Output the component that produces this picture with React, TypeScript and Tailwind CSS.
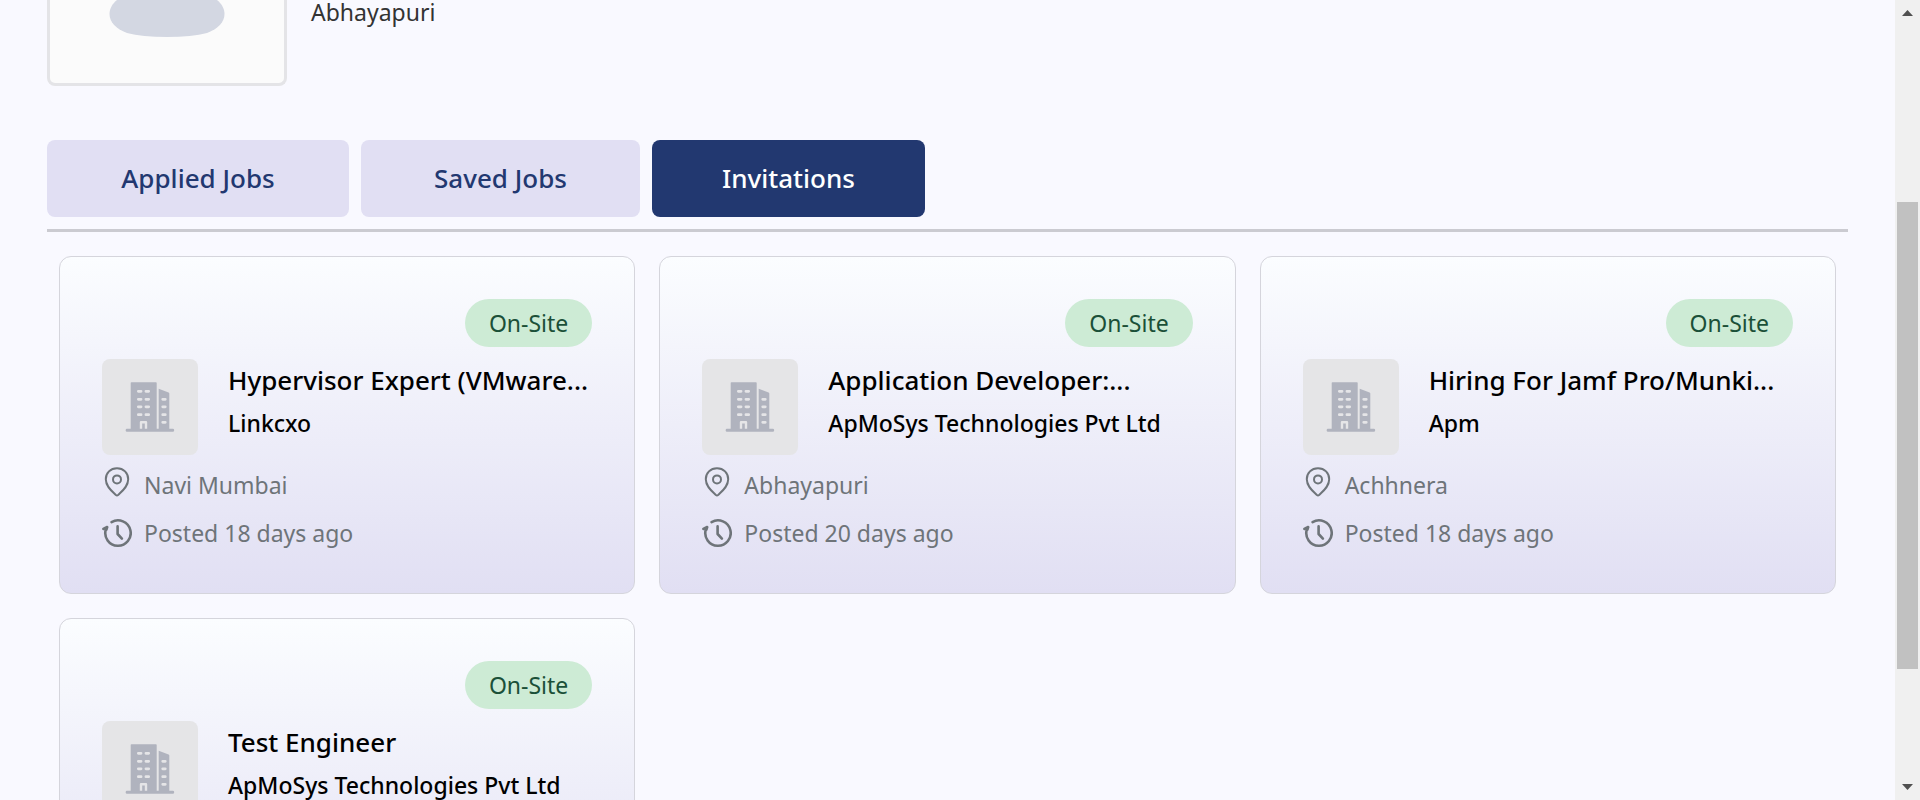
import { useState } from "react";

type Job = { title: string; company: string; location: string; posted: string; mode: string };

const jobs: Job[] = [
  { title: "Hypervisor Expert (VMware...", company: "Linkcxo", location: "Navi Mumbai", posted: "Posted 18 days ago", mode: "On-Site" },
  { title: "Application Developer:...", company: "ApMoSys Technologies Pvt Ltd", location: "Abhayapuri", posted: "Posted 20 days ago", mode: "On-Site" },
  { title: "Hiring For Jamf Pro/Munki...", company: "Apm", location: "Achhnera", posted: "Posted 18 days ago", mode: "On-Site" },
  { title: "Test Engineer", company: "ApMoSys Technologies Pvt Ltd", location: "Abhayapuri", posted: "Posted 20 days ago", mode: "On-Site" },
];

const tabs = [
  { name: "Applied Jobs", width: "w-[302px]" },
  { name: "Saved Jobs", width: "w-[279px]" },
  { name: "Invitations", width: "w-[273px]" },
];

function BuildingIcon() {
  return (
    <svg viewBox="0 0 96 96" className="size-24" aria-hidden="true">
      <g fill="#b0b3be">
        <rect x="28.7" y="23.3" width="26" height="48" rx="0.8" />
        <path d="M56.7 29.7 66.6 33.6Q67.3 34 67.3 34.8V71H56.7Z" />
        <rect x="23.7" y="69.8" width="48.4" height="2.9" rx="1.2" />
      </g>
      <g stroke="#e5e5e7" strokeWidth="2.7" strokeLinecap="round" fill="none">
        <path d="M36.3 32.3h2.8M43.9 32.3h2.8M36.3 40.3h2.8M43.9 40.3h2.8M36.3 47.8h2.8M43.9 47.8h2.8M36.3 55.7h2.8M43.9 55.7h2.8" />
        <path d="M60.7 40.3h2.6M60.7 47.8h2.6M60.7 55.7h2.6M60.7 63.3h2.6" />
      </g>
      <path d="M39 69.8V63.3H44V69.8" stroke="#e5e5e7" strokeWidth="2.4" strokeLinejoin="round" fill="none" />
    </svg>
  );
}

function PinIcon() {
  return (
    <svg viewBox="0 0 30 36" className="h-9 w-[30px] shrink-0" fill="none" stroke="currentColor" strokeWidth="2" strokeLinejoin="round" aria-hidden="true">
      <path d="M15 1.2C8.5 1.2 3.8 6 3.8 12.2c0 7.2 6 11.8 10.2 15.9q1 1 2 0c4.2-4.1 10.2-8.7 10.2-15.9C26.2 6 21.5 1.2 15 1.2Z" />
      <circle cx="15" cy="12.4" r="4" />
    </svg>
  );
}

function HistoryIcon() {
  return (
    <svg viewBox="0 0 30 36" className="h-9 w-[30px] shrink-0" fill="none" stroke="currentColor" strokeWidth="2.6" strokeLinecap="round" strokeLinejoin="round" aria-hidden="true">
      <path d="M9.6 7.1A12.7 12.7 0 1 1 3.9 14.2" />
      <path d="M1.4 14 5.2 12 4.4 14.6" />
      <path d="M15.6 11.4v7.6l4.3 4.6" />
    </svg>
  );
}

function JobCard({ job }: { job: Job }) {
  return (
    <article className="min-w-0 rounded-xl border border-[#d5d5dc] bg-linear-to-b from-[#fbfdff] to-[#e1dff3] p-[42px]">
      <div className="flex justify-end">
        <span className="rounded-full bg-[#cdebd5] px-6 text-[23px] leading-[48px] text-[#1b5038]">{job.mode}</span>
      </div>
      <div className="mt-3 flex gap-[30px]">
        <div className="size-24 shrink-0 rounded-lg bg-[#e5e5e7]">
          <BuildingIcon />
        </div>
        <div className="min-w-0 font-medium text-black">
          <h2 className="text-[26px] leading-[42px] whitespace-nowrap">{job.title}</h2>
          <p className="text-[23px] leading-[44px] whitespace-nowrap">{job.company}</p>
        </div>
      </div>
      <ul className="mt-3 flex flex-col gap-3 text-[23px] leading-9 text-[#6e7479]">
        <li className="flex gap-3">
          <PinIcon />
          {job.location}
        </li>
        <li className="flex gap-3">
          <HistoryIcon />
          {job.posted}
        </li>
      </ul>
    </article>
  );
}

function ScrollRail() {
  return (
    <div className="flex w-[25px] shrink-0 flex-col bg-[#f0f0f0]" aria-hidden="true">
      <svg viewBox="0 0 25 26" className="h-[26px] w-[25px]" fill="#505050">
        <path d="M12.5 10 18 16H7Z" />
      </svg>
      <div className="flex-[176]" />
      <div className="mx-0.5 flex-[467] bg-[#c1c1c1]" />
      <div className="flex-[105]" />
      <svg viewBox="0 0 25 26" className="h-[26px] w-[25px]" fill="#505050">
        <path d="M12.5 16 18 10H7Z" />
      </svg>
    </div>
  );
}

export default function App() {
  const [active, setActive] = useState("Invitations");
  return (
    <div className="flex h-screen overflow-hidden bg-[#f9f9ff] font-['Noto_Sans',sans-serif]">
      <main className="min-w-0 flex-1 overflow-hidden px-[47px]">
        <header className="flex gap-6 pb-[54px]">
          <div className="h-[86px] w-60 rounded-b-lg border-3 border-t-0 border-[#e4e4e7] bg-[#fbfbfb]">
            <svg viewBox="0 0 234 83" className="w-full" aria-hidden="true">
              <path d="M67 0C62 4 59.500 9 59.500 14C59.500 22 66 29 77 33Q92 37 117 37T157 33C168 29 174.500 22 174.500 14C174.500 9 172 4 167 0Z" fill="#d3d7e2" />
            </svg>
          </div>
          <p className="text-[23px] leading-6 text-[#333333]">Abhayapuri</p>
        </header>

        <nav className="flex gap-3 border-b-3 border-[#cbcbd1] pb-3" role="tablist">
          {tabs.map(({ name, width }) => (
            <button
              key={name}
              type="button"
              role="tab"
              aria-selected={active === name}
              onClick={() => setActive(name)}
              className={`${width} rounded-lg text-[26px] leading-[77px] font-medium ${active === name ? "bg-[#223870] text-white" : "bg-[#e1dff3] text-[#223870]"}`}
            >
              {name}
            </button>
          ))}
        </nav>

        <section className="grid grid-cols-3 gap-6 px-3 py-6">
          {jobs.map((job, index) => (
            <JobCard key={index} job={job} />
          ))}
        </section>
      </main>
      <ScrollRail />
    </div>
  );
}
